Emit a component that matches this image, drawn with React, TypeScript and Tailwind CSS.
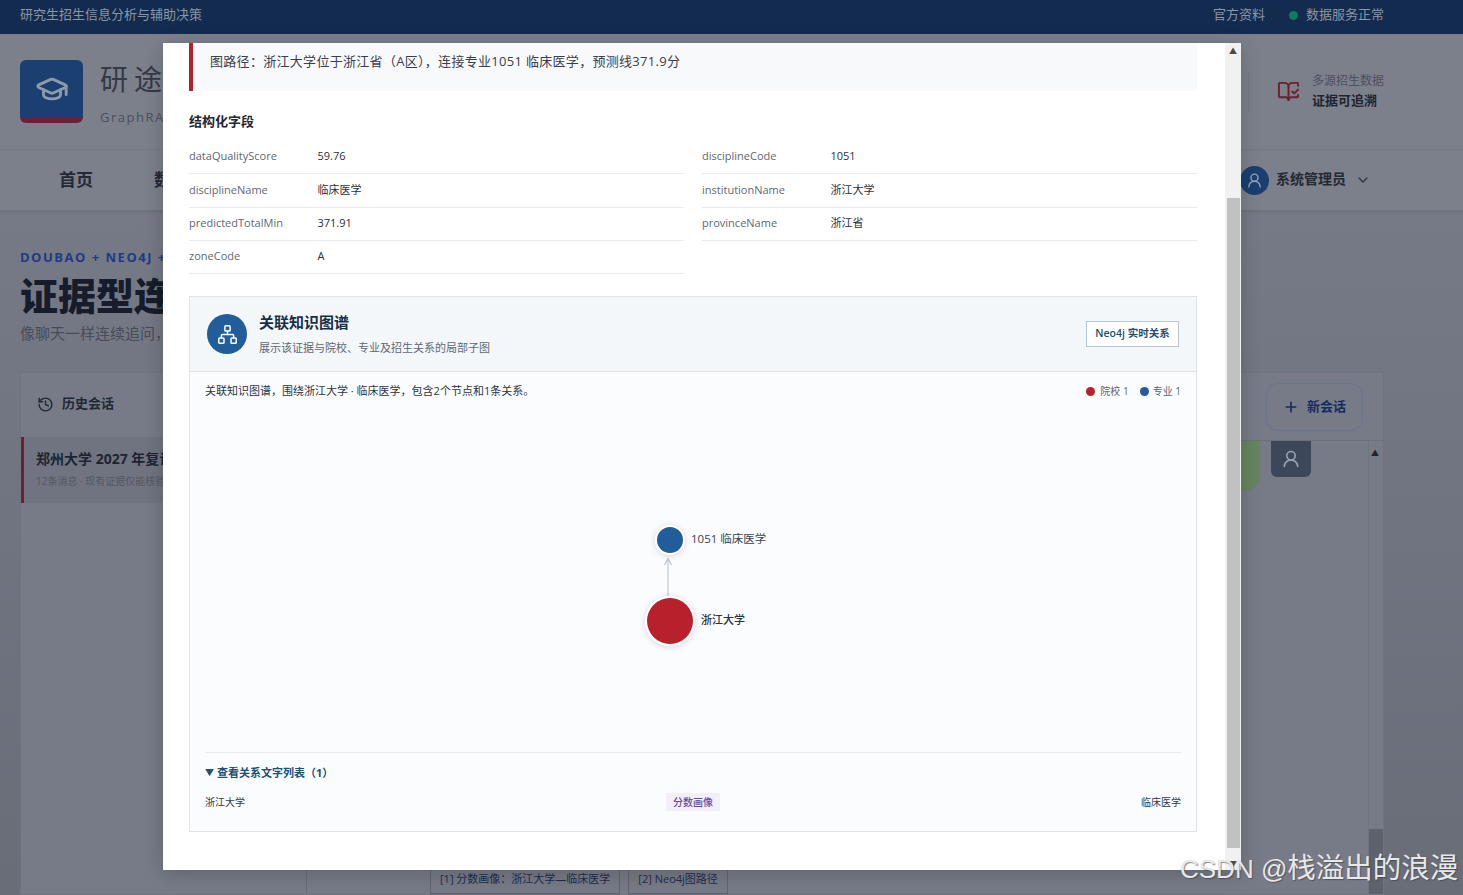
import { BookOpenCheck, ChevronDown, GraduationCap, History, Network, Plus, UserRound } from "lucide-react";

const FONT = "[font-family:'Open_Sans','Noto_Sans_CJK_SC',sans-serif]";

const FIELDS = [
  ["dataQualityScore", "59.76"],
  ["disciplineCode", "1051"],
  ["disciplineName", "临床医学"],
  ["institutionName", "浙江大学"],
  ["predictedTotalMin", "371.91"],
  ["provinceName", "浙江省"],
  ["zoneCode", "A"],
];

function Backdrop() {
  return (
    <div className="h-[895px] flex flex-col bg-gradient-to-b from-[#7a7e8a] to-[#686d78] overflow-hidden">
      <div className="h-[34px] shrink-0 bg-[#132b4e] flex items-center justify-between pl-5 pr-[79px] pb-1 text-[13px] text-[#8b95a5]">
        <span>研究生招生信息分析与辅助决策</span>
        <div className="flex items-center">
          <span>官方资料</span>
          <span className="ml-6 mr-2 w-[9px] h-[9px] rounded-full bg-[#0f7a5f]" />
          <span>数据服务正常</span>
        </div>
      </div>

      <div className="h-[116px] shrink-0 bg-[#7c808b] border-b border-[#767a85] flex items-center justify-between pl-5 pr-[79px]">
        <div className="flex items-center gap-[17px]">
          <div className="w-[63px] h-[63px] rounded-md bg-[#1b3f70] border-b-[5px] border-[#6d1f35] flex items-center justify-center text-[#8e9aab]">
            <GraduationCap size={34} strokeWidth={2} />
          </div>
          <div className="pt-[7px]">
            <div className="text-[28px] leading-9 tracking-[6px] text-[#343945] [font-family:'Liberation_Serif','Noto_Sans_CJK_SC',serif]">研途智答</div>
            <div className="mt-[9px] text-[13px] tracking-[1.5px] text-[#4b505c]">GraphRAG 考研决策助手</div>
          </div>
        </div>
        <div className="flex items-center h-[42px] border-l border-[#747883] pl-7">
          <BookOpenCheck size={23} className="text-[#6e1f2e]" />
          <div className="ml-3 -mt-px">
            <div className="text-xs leading-[18px] text-[#4c515d]">多源招生数据</div>
            <div className="text-[13px] leading-5 font-bold text-[#1e2430]">证据可追溯</div>
          </div>
        </div>
      </div>

      <div className="h-[60px] shrink-0 bg-[#7c808b] flex items-center justify-between pl-[59px] pr-[92px] shadow-[0_2px_4px_rgba(0,0,0,0.08)]">
        <div className="flex items-center gap-[61px] text-[17px] font-bold text-[#232935]">
          <span>首页</span>
          <span>数据</span>
        </div>
        <div className="flex items-center">
          <div className="w-[29px] h-[29px] rounded-full bg-[#1b3f70] flex items-center justify-center text-[#99a3b3]">
            <UserRound size={17} />
          </div>
          <span className="ml-[7px] pb-[3px] text-[14px] font-bold text-[#232935]">系统管理员</span>
          <ChevronDown size={16} className="ml-[9px] text-[#2f3541]" />
        </div>
      </div>

      <div className="pt-[39px] px-5 flex-1 flex flex-col min-h-0">
        <div className="text-[13px] leading-4 font-bold tracking-[1.5px] text-[#1f3a86]">DOUBAO + NEO4J + GRAPHRAG</div>
        <h1 className="mt-[6px] text-[38px] leading-[48px] font-black text-[#161c2b]">证据型连续问答</h1>
        <p className="mt-1 text-[15px] leading-5 text-[#474c58]">像聊天一样连续追问，每条回答都附带证据</p>

        <div className="mt-[29px] w-[1364px] flex-1 min-h-0 border border-[#70747f] flex bg-[#777b87]">
          <div className="w-[286px] shrink-0 border-r border-[#696d78]">
            <div className="h-[62px] flex items-center pl-4 gap-2 mb-[2px]">
              <History size={17} className="text-[#222936]" />
              <span className="text-[13px] font-bold text-[#222936]">历史会话</span>
            </div>
            <div className="h-[66px] border-l-[3px] border-[#6d1f35] bg-[#707480] pl-3 pt-3">
              <div className="text-sm font-bold text-[#1d2431]">郑州大学 2027 年复试</div>
              <div className="mt-[5px] text-[10px] text-[#535864]">12条消息 · 现有证据仅能核验</div>
            </div>
          </div>

          <div className="flex-1 min-w-0 flex flex-col">
            <div className="h-[68px] shrink-0 border-b border-[#6d717c] flex items-center justify-end pr-5 pt-[1px]">
              <div className="w-[97px] h-12 rounded-xl border border-[#6a7390] flex items-center justify-center gap-2 text-[13px] font-bold text-[#172b63]">
                <Plus size={16} strokeWidth={2.5} />
                <span>新会话</span>
              </div>
            </div>
            <div className="flex flex-1 min-h-0">
              <div className="flex-1 flex flex-col justify-between pl-[123px]">
                <div className="flex justify-end pr-[57px] gap-[11px] items-start">
                  <div className="w-[220px] h-[50px] rounded-b-2xl bg-[#668560]" />
                  <div className="w-10 h-9 rounded-b-md bg-[#3c475a] flex items-center justify-center text-[#99a1ae]">
                    <UserRound size={20} />
                  </div>
                </div>
                <div className="flex gap-2 text-[11px] text-[#1f2c4d]">
                  <span className="h-[30px] px-[9px] border border-[#5f6470] flex items-center">[1] 分数画像：浙江大学—临床医学</span>
                  <span className="h-[30px] px-[9px] border border-[#5f6470] flex items-center">[2] Neo4j图路径</span>
                </div>
              </div>
              <div className="w-[15px] shrink-0 border-l border-[#70747f] flex flex-col justify-between">
                <div className="pt-2 pl-[2px] text-[8px] leading-none text-[#1f2430]">▲</div>
                <div className="h-[65px] bg-[#5e626d]" />
              </div>
            </div>
          </div>
        </div>
      </div>
    </div>
  );
}

function EvidenceGraph() {
  return (
    <section className="mt-[22px] h-[536px] border border-[#dfe3e8] flex flex-col bg-[#fbfcfe]">
      <header className="h-[75px] shrink-0 bg-[#f4f7fa] border-b border-[#dfe3e8] flex items-center justify-between pl-[17px] pr-[17px]">
        <div className="flex items-center gap-3">
          <div className="w-10 h-10 rounded-full bg-[#215c9b] flex items-center justify-center text-white">
            <Network size={21} strokeWidth={1.7} />
          </div>
          <div>
            <h3 className="text-[15px] leading-[20px] font-bold text-[#17304a]">关联知识图谱</h3>
            <p className="mt-2 text-[11px] leading-4 text-[#5d6874]">展示该证据与院校、专业及招生关系的局部子图</p>
          </div>
        </div>
        <span className="w-[93px] h-[26px] border border-[#b4c6d4] bg-white flex items-center justify-center text-[10.5px] font-semibold text-[#24506f]">
          Neo4j 实时关系
        </span>
      </header>

      <div className="flex-1 min-h-0 px-[15px] flex flex-col">
        <div className="flex items-center justify-between h-[38px] shrink-0 text-[11px] text-[#2d3440]">
          <span>关联知识图谱，围绕浙江大学 · 临床医学，包含2个节点和1条关系。</span>
          <div className="flex items-center text-[10px] text-[#5d6570]">
            <span className="w-[9px] h-[9px] rounded-full bg-[#b8202c] mr-[5px]" />
            <span>院校 1</span>
            <span className="w-[9px] h-[9px] rounded-full bg-[#215c9b] ml-[11px] mr-[4px]" />
            <span>专业 1</span>
          </div>
        </div>

        <svg width="976" height="342" viewBox="0 0 976 342" className="shrink-0 border-b border-[#e6e9ee] box-content">
          <defs>
            <filter id="nodeShadow" x="-50%" y="-50%" width="200%" height="200%">
              <feDropShadow dx="0" dy="1" stdDeviation="3" floodColor="#1f2d3d" floodOpacity="0.16" />
            </filter>
          </defs>
          <line x1="463" y1="187" x2="463" y2="150" stroke="#ccd2da" strokeWidth="1.5" />
          <path d="M459.5 155 L463 148.5 L466.5 155" fill="none" stroke="#b9c0ca" strokeWidth="1.2" />
          <circle cx="465" cy="130" r="15" fill="#fff" filter="url(#nodeShadow)" />
          <circle cx="465" cy="130" r="13" fill="#215c9b" />
          <circle cx="465" cy="211" r="25" fill="#fff" filter="url(#nodeShadow)" />
          <circle cx="465" cy="211" r="23" fill="#b8202c" />
          <text x="486" y="133" fontSize="11.5" fill="#3a4250" fontFamily="'Open Sans','Noto Sans CJK SC',sans-serif">1051 临床医学</text>
          <text x="496" y="214" fontSize="11" fontWeight="500" fill="#2b3240" fontFamily="'Open Sans','Noto Sans CJK SC',sans-serif">浙江大学</text>
        </svg>

        <div className="h-10 flex items-center text-[11px] font-bold text-[#1e5070]">
          <span className="text-[9px] mr-[3px]">▼</span>查看关系文字列表（1）
        </div>
        <div className="flex items-center justify-between text-[10px] text-[#333a45]">
          <span>浙江大学</span>
          <span className="w-[54px] h-[18px] bg-[#f3eefa] flex items-center justify-center text-[10px] font-medium text-[#6a4a9c]">分数画像</span>
          <span>临床医学</span>
        </div>
      </div>
    </section>
  );
}

function Modal() {
  return (
    <div className="absolute left-[163px] top-[43px] w-[1078px] h-[827px] bg-white flex shadow-[0_4px_20px_rgba(0,0,0,0.2)]">
      <div className="flex-1 pl-[26px] pr-7">
        <div className="h-12 bg-[#f8f9fb] border-l-4 border-[#b5202d] pl-[17px] pt-[6px] text-[13px] leading-6 tracking-[0.3px] text-[#3a404b]">
          图路径：浙江大学位于浙江省（A区），连接专业1051 临床医学，预测线371.9分
        </div>

        <h2 className="mt-5 text-[13px] leading-5 font-bold text-[#232833]">结构化字段</h2>

        <div className="mt-[10px] grid grid-cols-2 gap-x-[18px]">
          {FIELDS.map(([label, value]) => (
            <div key={label} className="h-[33.3px] flex items-center pb-px border-b border-[#e8eaee] text-[11px]">
              <span className="w-[128.5px] shrink-0 text-[#5f6772]">{label}</span>
              <span className="text-[#2b303a]">{value}</span>
            </div>
          ))}
        </div>

        <EvidenceGraph />
      </div>

      <div className="w-4 shrink-0 bg-[#f1f1f1] flex flex-col items-center text-[8px] leading-none text-[#4a4a4a]">
        <div className="h-[155px] w-full flex justify-center pt-[4px]">▲</div>
        <div className="w-[13px] h-[650px] bg-[#c1c1c1]" />
        <div className="flex-1 flex items-end pb-[2px]">▼</div>
      </div>
    </div>
  );
}

export default function App() {
  return (
    <div className={`relative h-screen overflow-hidden ${FONT}`}>
      <Backdrop />
      <Modal />
      <div className="absolute left-[1180px] top-[851px] text-[26px] leading-[34px] whitespace-nowrap text-[#e8e8e8] [text-shadow:1px_1px_1px_rgba(60,60,60,0.6)] [font-family:'Liberation_Sans','Noto_Sans_CJK_SC',sans-serif]">
        CSDN @<span className="text-[28.5px]">栈溢出的浪漫</span>
      </div>
    </div>
  );
}
